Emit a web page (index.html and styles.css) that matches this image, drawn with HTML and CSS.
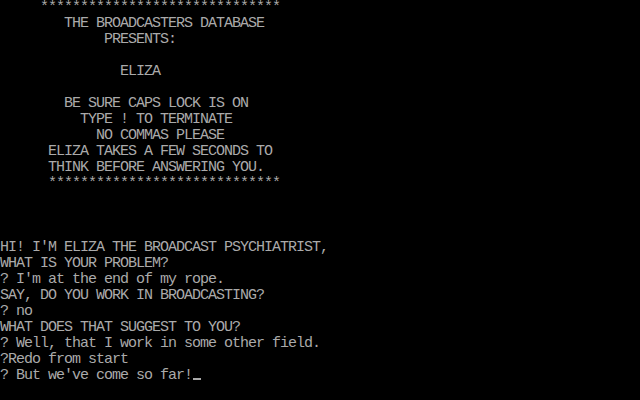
FILE: index.html
```html
<!DOCTYPE html>
<html lang="en">
<head>
<meta charset="utf-8">
<title>ELIZA</title>
<link rel="stylesheet" href="styles.css">
</head>
<body>
<pre class="screen">     ******************************
        THE BROADCASTERS DATABASE
             PRESENTS:

               ELIZA

        BE SURE CAPS LOCK IS ON
          TYPE ! TO TERMINATE
            NO COMMAS PLEASE
      ELIZA TAKES A FEW SECONDS TO
      THINK BEFORE ANSWERING YOU.
      *****************************



HI! I'M ELIZA THE BROADCAST PSYCHIATRIST,
WHAT IS YOUR PROBLEM?
? I'm at the end of my rope.
SAY, DO YOU WORK IN BROADCASTING?
? no
WHAT DOES THAT SUGGEST TO YOU?
? Well, that I work in some other field.
?Redo from start
? But we've come so far!<span class="cursor" aria-hidden="true"></span></pre>
</body>
</html>
```
FILE: styles.css
```css
html, body {
  margin: 0;
  padding: 0;
  background: #000;
}

body {
  width: 640px;
  height: 400px;
  overflow: hidden;
}

.screen {
  margin: 0;
  padding: 0;
  color: #aaaaaa;
  font-family: "Liberation Mono", "DejaVu Sans Mono", monospace;
  font-size: 15px;
  letter-spacing: -1px;
  line-height: 16px;
  white-space: pre;
}

.cursor {
  display: inline-block;
  width: 8px;
  height: 2px;
  margin-left: 1px;
  background: #aaaaaa;
  vertical-align: -1px;
}
```
